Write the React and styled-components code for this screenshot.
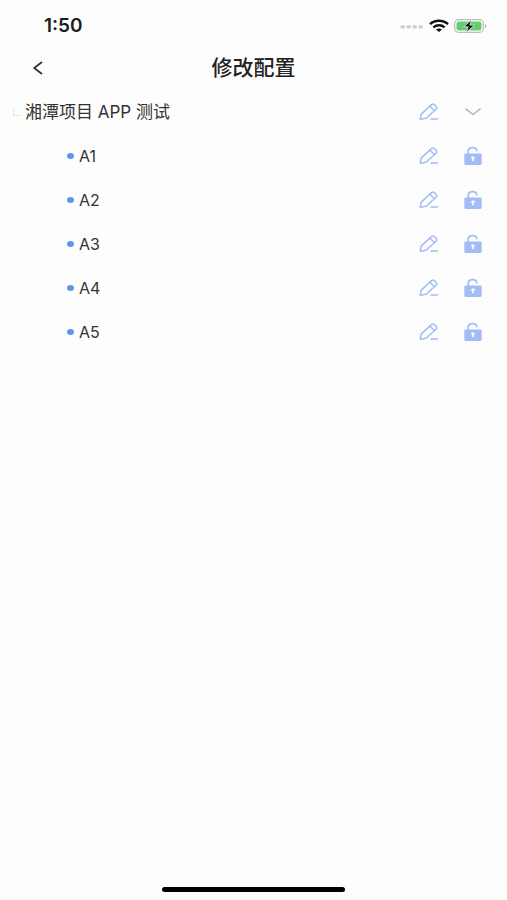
import React, { useState } from "react";
import styled, { createGlobalStyle } from "styled-components";

const GlobalStyle = createGlobalStyle`
  * { box-sizing: border-box; }
  body {
    margin: 0;
    background: #fdfdfd;
    color: #333;
    font-family: Inter, "Noto Sans CJK SC", sans-serif;
  }
`;

const Screen = styled.div`
  display: flex;
  flex-direction: column;
  min-height: 100vh;
`;

const StatusBar = styled.div`
  display: flex;
  align-items: center;
  justify-content: space-between;
  height: 45px;
  padding: 7px 20px 0 44px;
`;

const Clock = styled.time`
  font-size: 19px;
  line-height: 20px;
  font-weight: 600;
  color: #1c1c1c;
`;

const StatusIcons = styled.div`
  display: flex;
  align-items: center;
  gap: 5px;
`;

const Header = styled.header`
  display: grid;
  grid-template-columns: 44px 1fr 44px;
  align-items: center;
  height: 45px;
  padding: 0 16px;
`;

const Title = styled.h1`
  margin: 0;
  font-size: 21px;
  line-height: 28px;
  font-weight: 500;
  text-align: center;
  color: #222;
`;

const IconButton = styled.button`
  display: flex;
  align-items: center;
  justify-content: center;
  width: 44px;
  height: 44px;
  padding: 0;
  border: 0;
  background: none;
  color: ${(p) => p.$color};
  cursor: pointer;
`;

const List = styled.ul`
  margin: 0;
  padding: 0;
  list-style: none;
`;

const Row = styled.div`
  display: flex;
  align-items: center;
  height: 44px;
  padding-left: ${(p) => (p.$nested ? 67 : 13)}px;
  padding-right: 12px;
`;

const Branch = styled.span`
  width: 7px;
  height: 7px;
  margin-right: 5px;
  border-left: 1px solid #e4e4e4;
  border-bottom: 1px solid #e4e4e4;
`;

const Dot = styled.span`
  width: 7px;
  height: 6px;
  margin-right: 5px;
  border-radius: 50%;
  background: #5c98e8;
`;

const Label = styled.span`
  flex: 1;
  font-size: ${(p) => (p.$small ? 16 : 17)}px;
  line-height: 24px;
`;

const HomeIndicator = styled.div`
  width: 36%;
  height: 5px;
  margin: auto auto 8px;
  border-radius: 3px;
  background: #000;
`;

const Signal = () => (
  <svg width="24" height="6" viewBox="0 0 24 6" fill="#cdcdcd" aria-hidden="true">
    {[0, 6, 12, 18].map((x) => (
      <rect key={x} x={x + 0.6} y="2.2" width="4.2" height="3.4" rx="1" />
    ))}
  </svg>
);

const Wifi = () => (
  <svg width="20" height="14" viewBox="0 0 20 14" fill="none" stroke="#111" strokeWidth="2.4" aria-hidden="true">
    <path d="M1 5.1C6 .6 14 .6 19 5.1" />
    <path d="M4.4 8.3c3.2-2.8 8-2.8 11.2 0" />
    <path d="M7 10.5c1.8-1.4 4.2-1.4 6 0L10 13Z" fill="#111" stroke="none" />
  </svg>
);

const Battery = () => (
  <svg width="33" height="16" viewBox="0 0 33 16" aria-hidden="true">
    <rect x=".7" y="1.7" width="28.6" height="12.6" rx="3.8" fill="#fdfdfd" stroke="#bcbcbc" strokeWidth="1.2" />
    <rect x="2.5" y="3.5" width="25" height="9" rx="2.2" fill="#65cf70" />
    <path d="M31 6v4c1.9-.6 1.9-3.4 0-4Z" fill="#aaa" />
    <path d="M17.6 1.7 9.8 8.8h4.4l-1.8 5.6 7.9-7.3h-4.5Z" fill="#111" stroke="#fdfdfd" strokeWidth=".7" />
  </svg>
);

const BackIcon = () => (
  <svg width="12" height="14" viewBox="0 0 12 14" fill="none" stroke="#333" strokeWidth="1.8" aria-hidden="true">
    <path d="M10 1 2.2 7l7.8 6" />
  </svg>
);

const PencilIcon = () => (
  <svg width="20" height="18" viewBox="0 0 20 18" fill="none" stroke="currentColor" strokeWidth="1.5" strokeLinejoin="round" strokeLinecap="round" aria-hidden="true">
    <path d="m1.2 16.2 1-5.1L12.4 1.6c.8-.7 2-.7 2.8 0l2.1 1.9c.8.7.8 1.8 0 2.5L7.1 15.2Z" />
    <path d="m10.8 3.3 4.7 4.2M12.1 16.1h6.3" />
  </svg>
);

const ChevronIcon = () => (
  <svg width="18" height="10" viewBox="0 0 18 10" fill="none" stroke="currentColor" strokeWidth="1.5" aria-hidden="true">
    <path d="m1.5 1.6 7.5 6 7.5-6" />
  </svg>
);

const UnlockIcon = () => (
  <svg width="18" height="20" viewBox="0 0 18 20" aria-hidden="true">
    <path d="M4.2 9V5.5C4.2.5 12 .3 12.9 4.6" fill="none" stroke="currentColor" strokeWidth="1.7" strokeLinecap="round" />
    <rect x=".3" y="7.6" width="17.4" height="11.4" rx="1.4" fill="currentColor" />
    <path d="M9 10.6c-2.2 0-2.3 2.1-.8 2.7v2h1.6v-2c1.5-.6 1.4-2.7-.8-2.7Z" fill="#fdfdfd" />
  </svg>
);

const devices = ["A1", "A2", "A3", "A4", "A5"];

export default function App() {
  const [open, setOpen] = useState(true);

  return (
    <Screen>
      <GlobalStyle />
      <StatusBar>
        <Clock>1:50</Clock>
        <StatusIcons>
          <Signal />
          <Wifi />
          <Battery />
        </StatusIcons>
      </StatusBar>
      <Header>
        <IconButton type="button" aria-label="返回" $color="#333">
          <BackIcon />
        </IconButton>
        <Title>修改配置</Title>
      </Header>
      <main>
        <List>
          <li>
            <Row>
              <Branch />
              <Label>湘潭项目 APP 测试</Label>
              <IconButton type="button" aria-label="编辑项目" $color="#a3bcf6">
                <PencilIcon />
              </IconButton>
              <IconButton
                type="button"
                aria-label="展开或收起"
                aria-expanded={open}
                onClick={() => setOpen(!open)}
                $color="#b5b5b5"
              >
                <ChevronIcon />
              </IconButton>
            </Row>
            {open && (
              <List>
                {devices.map((name) => (
                  <li key={name}>
                    <Row $nested>
                      <Dot />
                      <Label $small>{name}</Label>
                      <IconButton type="button" aria-label={`编辑 ${name}`} $color="#a3bcf6">
                        <PencilIcon />
                      </IconButton>
                      <IconButton type="button" aria-label={`锁定 ${name}`} $color="#a3bcf6">
                        <UnlockIcon />
                      </IconButton>
                    </Row>
                  </li>
                ))}
              </List>
            )}
          </li>
        </List>
      </main>
      <HomeIndicator />
    </Screen>
  );
}
